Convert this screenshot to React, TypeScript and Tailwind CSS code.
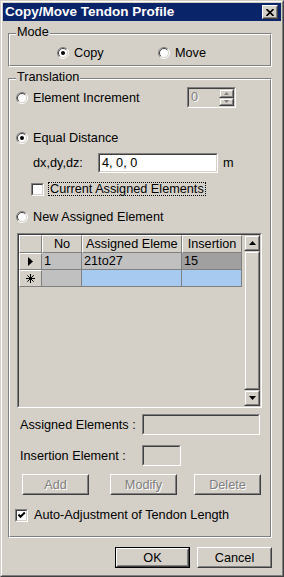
import React from 'react';

type BoxProps = { className?: string; inner?: string; children?: React.ReactNode };

// classic 3d frames
function Raised({ className = '', inner = '', children }: BoxProps) {
  return (
    <div className={`border border-white border-r-[#404040] border-b-[#404040] ${className}`}>
      <div className={`w-full h-full border border-[#d4d0c8] border-r-[#808080] border-b-[#808080] flex items-center justify-center ${inner}`}>
        {children}
      </div>
    </div>
  );
}

function ScrollBtn({ className = '', children }: BoxProps) {
  return (
    <div className={`border border-[#d4d0c8] border-r-[#404040] border-b-[#404040] ${className}`}>
      <div className="w-full h-full border border-white border-r-[#808080] border-b-[#808080] bg-[#d4d0c8] flex items-center justify-center">
        {children}
      </div>
    </div>
  );
}

function Sunken({ className = '', inner = '', children }: BoxProps) {
  return (
    <div className={`border border-[#808080] border-r-white border-b-white ${className}`}>
      <div className={`w-full h-full border border-[#404040] border-r-[#d4d0c8] border-b-[#d4d0c8] flex ${inner}`}>
        {children}
      </div>
    </div>
  );
}

function GroupBox({ label, className = '', children }: { label: string; className?: string; children?: React.ReactNode }) {
  return (
    <div className={`relative border border-[#808080] border-r-white border-b-white ${className}`}>
      <div className="w-full h-full border border-white border-r-[#808080] border-b-[#808080] flex flex-col">
        {children}
      </div>
      <span className="absolute left-[7px] top-[-9px] bg-[#d4d0c8] px-[1px] leading-[14px]">{label}</span>
    </div>
  );
}

function Radio({ checked = false }: { checked?: boolean }) {
  return (
    <svg width="12" height="12" viewBox="0 0 12 12" className="shrink-0">
      <circle cx="6" cy="6" r="5" fill="#fff" />
      <path d="M2.1 9.9 A5.5 5.5 0 0 1 9.9 2.1" fill="none" stroke="#808080" />
      <path d="M9.9 2.1 A5.5 5.5 0 0 1 2.1 9.9" fill="none" stroke="#fff" />
      <path d="M2.8 9.2 A4.5 4.5 0 0 1 9.2 2.8" fill="none" stroke="#404040" />
      <path d="M9.2 2.8 A4.5 4.5 0 0 1 2.8 9.2" fill="none" stroke="#d4d0c8" />
      {checked && <circle cx="6" cy="6" r="2" fill="#000" />}
    </svg>
  );
}

function CheckBox({ checked = false }: { checked?: boolean }) {
  return (
    <Sunken className="w-[13px] h-[13px] shrink-0" inner="bg-white items-center justify-center">
      {checked && (
        <svg width="9" height="9" viewBox="0 0 9 9">
          <path d="M1.5 3.5 L3.5 5.8 L7.8 1.5" stroke="#000" strokeWidth="2" fill="none" />
        </svg>
      )}
    </Sunken>
  );
}

const disabledText = 'text-[#808080] [text-shadow:1px_1px_0_#fff]';

export default function App() {
  return (
    <div className="w-[284px] h-[577px] bg-[#d4d0c8] border border-[#d4d0c8] border-r-[#404040] border-b-[#404040] font-['Liberation_Sans',Arial,sans-serif] text-[12.7px] leading-[14px] text-black select-none">
      <div className="w-full h-full border border-white border-r-[#808080] border-b-[#808080] p-px flex flex-col">
        {/* title bar */}
        <div className="h-[18px] bg-[#0a246a] flex items-center pl-[2px] pr-[3px]">
          <span className="text-white font-bold text-[13.5px]">Copy/Move Tendon Profile</span>
          <Raised className="ml-auto w-[16px] h-[14px]" inner="bg-[#d4d0c8]">
            <svg width="8" height="7" viewBox="0 0 8 7">
              <path d="M0.5 0 L7.5 7 M7.5 0 L0.5 7" stroke="#000" strokeWidth="1.6" />
            </svg>
          </Raised>
        </div>

        {/* Mode */}
        <GroupBox label="Mode" className="mt-[12px] ml-[5px] w-[264px] h-[34px]">
          <div className="flex items-center h-full pt-[5px] pl-[47px]">
            <div className="w-[101px] flex items-center gap-[5px]">
              <Radio checked />
              <span>Copy</span>
            </div>
            <div className="flex items-center gap-[5px]">
              <Radio />
              <span>Move</span>
            </div>
          </div>
        </GroupBox>

        {/* Translation */}
        <GroupBox label="Translation" className="mt-[11px] ml-[5px] w-[264px] h-[460px]">
          <div className="mt-[7px] h-[21px] flex items-center">
            <div className="ml-[6px] flex items-center gap-[5px]">
              <Radio />
              <span>Element Increment</span>
            </div>
            <Sunken className="ml-auto mr-[34px] w-[49px] h-[21px]" inner="bg-[#d4d0c8] items-stretch">
              <span className={`flex-1 pl-[2px] pt-[1px] ${disabledText}`}>0</span>
              <div className="w-[15px] flex flex-col">
                <ScrollBtn className="h-1/2">
                  <svg width="5" height="3" viewBox="0 0 5 3"><path d="M2.5 0 L5 3 L0 3 Z" fill="#808080" /></svg>
                </ScrollBtn>
                <ScrollBtn className="h-1/2">
                  <svg width="5" height="3" viewBox="0 0 5 3"><path d="M0 0 L5 0 L2.5 3 Z" fill="#808080" /></svg>
                </ScrollBtn>
              </div>
            </Sunken>
          </div>

          <div className="mt-[22px] h-[16px] ml-[6px] flex items-center gap-[5px]">
            <Radio checked />
            <span>Equal Distance</span>
          </div>

          <div className="mt-[7px] h-[20px] ml-[23px] flex items-center">
            <span className="w-[65px]">dx,dy,dz:</span>
            <Sunken className="w-[120px] h-[20px]" inner="bg-white items-center">
              <span className="pl-[2px]">4, 0, 0</span>
            </Sunken>
            <span className="ml-[5px]">m</span>
          </div>

          <div className="mt-[9px] h-[14px] ml-[21px] flex items-center gap-[4px]">
            <CheckBox />
            <span className="border border-dotted border-black px-[1px] leading-[12px]">Current Assigned Elements</span>
          </div>

          <div className="mt-[13px] h-[16px] ml-[6px] flex items-center gap-[5px]">
            <Radio />
            <span>New Assigned Element</span>
          </div>

          {/* grid */}
          <Sunken className="mt-[8px] ml-[7px] w-[245px] h-[175px]" inner="bg-[#d4d0c8] items-stretch">
            <div className="w-[223px] flex flex-col">
              <div className="h-[18px] flex">
                <div className="w-[23px] border border-white border-r-[#808080] border-b-[#808080]" />
                <div className="w-[40px] border border-white border-r-[#808080] border-b-[#808080] flex items-center justify-center">No</div>
                <div className="w-[100px] border border-white border-r-[#808080] border-b-[#808080] flex items-center pl-[3px] overflow-hidden whitespace-nowrap">Assigned Eleme</div>
                <div className="w-[60px] border border-white border-r-[#808080] border-b-[#808080] flex items-center justify-center whitespace-nowrap">Insertion</div>
              </div>
              <div className="h-[17px] flex">
                <div className="w-[23px] border border-white border-r-[#808080] border-b-[#808080] flex items-center justify-center">
                  <svg width="5" height="9" viewBox="0 0 5 9"><path d="M0 0 L5 4.5 L0 9 Z" fill="#000" /></svg>
                </div>
                <div className="w-[40px] bg-[#c0c0c0] border-r border-b border-[#808080] pl-[2px] flex items-center">1</div>
                <div className="w-[100px] bg-[#c0c0c0] border-r border-b border-[#808080] pl-[2px] flex items-center">21to27</div>
                <div className="w-[60px] bg-[#a0a0a0] border-r border-b border-[#808080] pl-[2px] flex items-center">15</div>
              </div>
              <div className="h-[17px] flex">
                <div className="w-[23px] border border-white border-r-[#808080] border-b-[#808080] flex items-center justify-center">
                  <svg width="9" height="9" viewBox="0 0 9 9">
                    <path d="M4.5 0 V9 M0 4.5 H9 M1.3 1.3 L7.7 7.7 M7.7 1.3 L1.3 7.7" stroke="#000" strokeWidth="1" />
                  </svg>
                </div>
                <div className="w-[40px] bg-[#c0c0c0] border-r border-b border-[#808080]" />
                <div className="w-[100px] bg-[#a6caf0] border-r border-b border-[#808080]" />
                <div className="w-[60px] bg-[#a6caf0] border-r border-b border-[#808080]" />
              </div>
            </div>
            <div className="ml-auto w-[16px] flex flex-col">
              <ScrollBtn className="h-[16px]">
                <svg width="7" height="4" viewBox="0 0 7 4"><path d="M3.5 0 L7 4 L0 4 Z" fill="#000" /></svg>
              </ScrollBtn>
              <ScrollBtn className="flex-1" />
              <ScrollBtn className="h-[16px]">
                <svg width="7" height="4" viewBox="0 0 7 4"><path d="M0 0 L7 0 L3.5 4 Z" fill="#000" /></svg>
              </ScrollBtn>
            </div>
          </Sunken>

          <div className="mt-[6px] h-[21px] ml-[10px] flex items-center">
            <span className="w-[122px]">Assigned Elements :</span>
            <Sunken className="w-[118px] h-[21px]" inner="bg-[#d4d0c8]" />
          </div>

          <div className="mt-[10px] h-[21px] ml-[10px] flex items-center">
            <span className="w-[122px]">Insertion Element :</span>
            <Sunken className="w-[39px] h-[21px]" inner="bg-[#d4d0c8]" />
          </div>

          <div className="mt-[8px] h-[21px] flex">
            <Raised className="ml-[12px] w-[67px] h-[21px]" inner="bg-[#d4d0c8]">
              <span className={disabledText}>Add</span>
            </Raised>
            <Raised className="ml-[21px] w-[67px] h-[21px]" inner="bg-[#d4d0c8]">
              <span className={disabledText}>Modify</span>
            </Raised>
            <Raised className="ml-[17px] w-[67px] h-[21px]" inner="bg-[#d4d0c8]">
              <span className={disabledText}>Delete</span>
            </Raised>
          </div>

          <div className="mt-[13px] h-[14px] ml-[5px] flex items-center gap-[6px]">
            <CheckBox checked />
            <span>Auto-Adjustment of Tendon Length</span>
          </div>
        </GroupBox>

        {/* dialog buttons */}
        <div className="mt-[9px] h-[21px] flex">
          <div className="ml-[112px] w-[75px] h-[21px] border border-black">
            <Raised className="w-full h-full" inner="bg-[#d4d0c8]">
              <span>OK</span>
            </Raised>
          </div>
          <Raised className="ml-[7px] w-[75px] h-[21px]" inner="bg-[#d4d0c8]">
            <span>Cancel</span>
          </Raised>
        </div>
      </div>
    </div>
  );
}
